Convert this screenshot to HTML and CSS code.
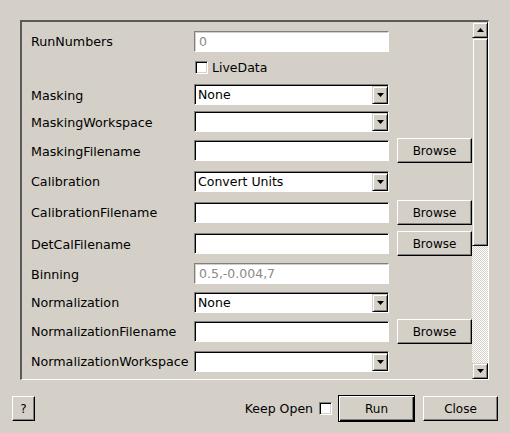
FILE: index.html
```html
<!DOCTYPE html>
<html>
<head>
<meta charset="utf-8">
<link rel="stylesheet" href="styles.css">
</head>
<body>
<div class="dialog">
  <div class="frame">
    <div class="content">
      <div class="form">
        <div class="lbl">RunNumbers</div>
        <div class="edit disabled">0</div>

        <div class="check-row"><span class="check"></span><span>LiveData</span></div>

        <div class="lbl">Masking</div>
        <div class="combo"><span class="combo-text">None</span><span class="combo-btn"><svg width="7" height="4" viewBox="0 0 7 4"><polygon points="0,0 7,0 3.5,4" fill="#000"/></svg></span></div>

        <div class="lbl">MaskingWorkspace</div>
        <div class="combo"><span class="combo-text"></span><span class="combo-btn"><svg width="7" height="4" viewBox="0 0 7 4"><polygon points="0,0 7,0 3.5,4" fill="#000"/></svg></span></div>

        <div class="lbl">MaskingFilename</div>
        <div class="edit"></div>
        <button class="btn browse">Browse</button>

        <div class="lbl">Calibration</div>
        <div class="combo"><span class="combo-text">Convert Units</span><span class="combo-btn"><svg width="7" height="4" viewBox="0 0 7 4"><polygon points="0,0 7,0 3.5,4" fill="#000"/></svg></span></div>

        <div class="lbl">CalibrationFilename</div>
        <div class="edit"></div>
        <button class="btn browse">Browse</button>

        <div class="lbl">DetCalFilename</div>
        <div class="edit"></div>
        <button class="btn browse">Browse</button>

        <div class="lbl">Binning</div>
        <div class="edit disabled">0.5,-0.004,7</div>

        <div class="lbl">Normalization</div>
        <div class="combo"><span class="combo-text">None</span><span class="combo-btn"><svg width="7" height="4" viewBox="0 0 7 4"><polygon points="0,0 7,0 3.5,4" fill="#000"/></svg></span></div>

        <div class="lbl">NormalizationFilename</div>
        <div class="edit"></div>
        <button class="btn browse">Browse</button>

        <div class="lbl">NormalizationWorkspace</div>
        <div class="combo"><span class="combo-text"></span><span class="combo-btn"><svg width="7" height="4" viewBox="0 0 7 4"><polygon points="0,0 7,0 3.5,4" fill="#000"/></svg></span></div>
      </div>
    </div>
    <div class="scrollbar">
      <div class="sb-btn"><svg width="7" height="4" viewBox="0 0 7 4"><polygon points="3.5,0 7,4 0,4" fill="#000"/></svg></div>
      <div class="sb-slider"></div>
      <div class="sb-trough"></div>
      <div class="sb-btn"><svg width="7" height="4" viewBox="0 0 7 4"><polygon points="0,0 7,0 3.5,4" fill="#000"/></svg></div>
    </div>
  </div>
  <div class="footer">
    <button class="btn help">?</button>
    <div class="spacer"></div>
    <span class="keep">Keep Open</span>
    <span class="check footer-check"></span>
    <button class="btn default">Run</button>
    <button class="btn">Close</button>
  </div>
</div>
</body>
</html>
```

FILE: styles.css
```css
html, body {
  margin: 0;
  padding: 0;
}

body {
  background: #d4d0c8;
  font-family: "DejaVu Sans", "Noto Sans", sans-serif;
  font-size: 12.5px;
  color: #000;
  width: 510px;
  height: 433px;
  overflow: hidden;
}

.dialog {
  padding-top: 20px;
}

.frame {
  margin-left: 20px;
  width: 469px;
  height: 360px;
  box-sizing: border-box;
  border-style: solid;
  border-width: 2px 1px 1px 2px;
  border-color: #5a5a5a #ffffff #ffffff #5a5a5a;
  display: flex;
  overflow: hidden;
}

.content {
  width: 450px;
  flex: none;
  overflow: hidden;
}

.form {
  display: grid;
  grid-template-columns: 163px 195px 83px;
  grid-template-rows: 26px 27px 27px 27px 31px 30px 32px 31px 29px 28px 30px 30px;
  padding: 6px 0 0 9px;
  align-items: center;
}

.lbl {
  grid-column: 1;
  white-space: nowrap;
  font-size: 12.7px;
  line-height: 16px;
  padding-top: 2px;
}

.edit,
.combo,
.check-row {
  grid-column: 2;
}

.browse {
  grid-column: 3;
  justify-self: end;
}

.edit {
  height: 21px;
  box-sizing: border-box;
  background: #fff;
  border: 1px solid;
  border-color: #808080 #ffffff #ffffff #808080;
  box-shadow: inset 1px 1px 0 #000;
  padding: 0 4px;
  line-height: 19px;
  white-space: nowrap;
}

.edit.disabled {
  color: #8a8a8a;
  box-shadow: inset 1px 1px 0 #d4d0c8;
  padding-left: 4px;
}

.combo {
  height: 21px;
  box-sizing: border-box;
  background: #fff;
  border: 1px solid;
  border-color: #808080 #ffffff #ffffff #808080;
  box-shadow: inset 1px 1px 0 #000;
  padding: 1px 0 0 1px;
  display: flex;
}

.combo-text {
  flex: 1;
  padding-left: 2px;
  line-height: 18px;
  white-space: nowrap;
}

.combo-btn {
  width: 16px;
  height: 18px;
  box-sizing: border-box;
  background: #d4d0c8;
  border: 1px solid;
  border-color: #d4d0c8 #000 #000 #d4d0c8;
  box-shadow: inset 1px 1px 0 #fff, inset -1px -1px 0 #808080;
  display: flex;
  align-items: center;
  justify-content: center;
}

.check-row {
  display: flex;
  align-items: center;
  gap: 4px;
  padding-left: 1px;
  line-height: 16px;
}

.check {
  display: inline-block;
  width: 13px;
  height: 13px;
  box-sizing: border-box;
  background: #fff;
  border: 1px solid;
  border-color: #808080 #ffffff #ffffff #808080;
  box-shadow: inset 1px 1px 0 #000, inset -1px -1px 0 #d4d0c8;
  flex: none;
}

.btn {
  font-family: inherit;
  font-size: 12px;
  color: #000;
  background: #d4d0c8;
  width: 75px;
  height: 25px;
  box-sizing: border-box;
  border: 1px solid;
  border-color: #ffffff #000000 #000000 #ffffff;
  box-shadow: inset -1px -1px 0 #808080;
  padding: 1px 0 0;
  margin: 0;
  flex: none;
}

.btn.default {
  width: 77px;
  height: 27px;
  border: 1px solid #000;
  box-shadow: inset 1px 1px 0 #fff, inset -1px -1px 0 #000, inset -2px -2px 0 #808080;
  margin-right: 8px;
}

.btn.help {
  width: 23px;
  height: 25px;
}

.scrollbar {
  width: 16px;
  flex: none;
  display: flex;
  flex-direction: column;
}

.sb-btn,
.sb-slider {
  box-sizing: border-box;
  background: #d4d0c8;
  border: 1px solid;
  border-color: #d4d0c8 #000 #000 #d4d0c8;
  box-shadow: inset 1px 1px 0 #fff, inset -1px -1px 0 #808080;
}

.sb-btn {
  height: 16px;
  display: flex;
  align-items: center;
  justify-content: center;
  flex: none;
}

.sb-slider {
  height: 208px;
  flex: none;
}

.sb-trough {
  flex: 1;
  background-color: #d4d0c8;
  background-image: conic-gradient(#ffffff 25%, #d4d0c8 0 50%, #ffffff 0 75%, #d4d0c8 0);
  background-size: 2px 2px;
}

.footer {
  display: flex;
  align-items: center;
  height: 27px;
  margin-top: 15px;
  padding: 0 12px;
}

.spacer {
  flex: 1;
}

.keep {
  margin-right: 6px;
  white-space: nowrap;
}

.footer-check {
  margin-right: 6px;
}
```
